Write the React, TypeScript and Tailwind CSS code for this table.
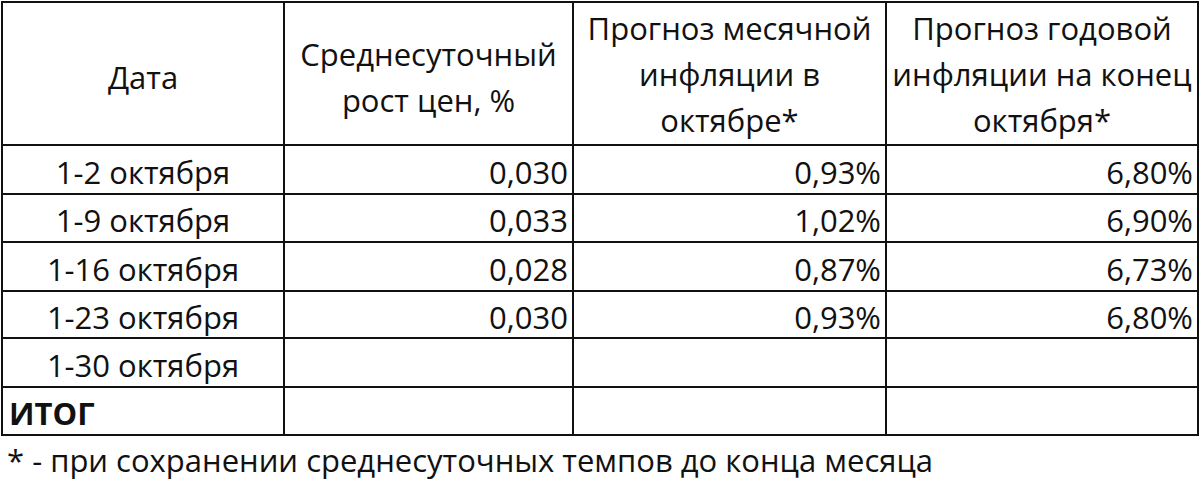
import React from 'react';

interface Row {
    date: string;
    daily: string;
    monthly: string;
    yearly: string;
    bold?: boolean;
    h: string;
}

const rows: Row[] = [
    { date: '1-2 октября', daily: '0,030', monthly: '0,93%', yearly: '6,80%', h: 'h-[49px]' },
    { date: '1-9 октября', daily: '0,033', monthly: '1,02%', yearly: '6,90%', h: 'h-[48px]' },
    { date: '1-16 октября', daily: '0,028', monthly: '0,87%', yearly: '6,73%', h: 'h-[49px]' },
    { date: '1-23 октября', daily: '0,030', monthly: '0,93%', yearly: '6,80%', h: 'h-[47px]' },
    { date: '1-30 октября', daily: '', monthly: '', yearly: '', h: 'h-[49px]' },
    { date: 'ИТОГ', daily: '', monthly: '', yearly: '', bold: true, h: 'h-[48px]' },
];

const cell = 'border-2 border-[#111] leading-[36px] pt-[4px]';

export default function App() {
    return (
        <div className="w-[1200px] h-[485px] bg-white text-[#111] font-['Open_Sans',sans-serif] text-[31px] pt-px pl-px overflow-hidden">
            <table className="table-fixed border-collapse">
                <colgroup>
                    <col className="w-[282px]" />
                    <col className="w-[289px]" />
                    <col className="w-[313px]" />
                    <col className="w-[312px]" />
                </colgroup>
                <thead>
                    <tr className="h-[143px]">
                        <th className="border-2 border-[#111] font-normal text-center align-middle leading-[46px] pt-[6px]">Дата</th>
                        <th className="border-2 border-[#111] font-normal text-center align-middle leading-[46px] pt-[6px]">
                            Среднесуточный<br />рост цен, %
                        </th>
                        <th className="border-2 border-[#111] font-normal text-center align-middle leading-[46px]">
                            Прогноз месячной<br />инфляции в<br />октябре*
                        </th>
                        <th className="border-2 border-[#111] font-normal text-center align-middle leading-[46px]">
                            Прогноз годовой<br />инфляции на конец<br />октября*
                        </th>
                    </tr>
                </thead>
                <tbody>
                    {rows.map((row, i) => (
                        <tr key={i} className={row.h}>
                            <td className={`${cell} ${row.bold ? 'font-bold text-left pl-[6px]' : 'text-center'}`}>
                                {row.date}
                            </td>
                            <td className={`${cell} text-right pr-[4px]`}>{row.daily}</td>
                            <td className={`${cell} text-right pr-[4px]`}>{row.monthly}</td>
                            <td className={`${cell} text-right pr-[4px]`}>{row.yearly}</td>
                        </tr>
                    ))}
                </tbody>
            </table>
            <p className="pl-[6px] pt-[4px] leading-[40px]">* - при сохранении среднесуточных темпов до конца месяца</p>
        </div>
    );
}
